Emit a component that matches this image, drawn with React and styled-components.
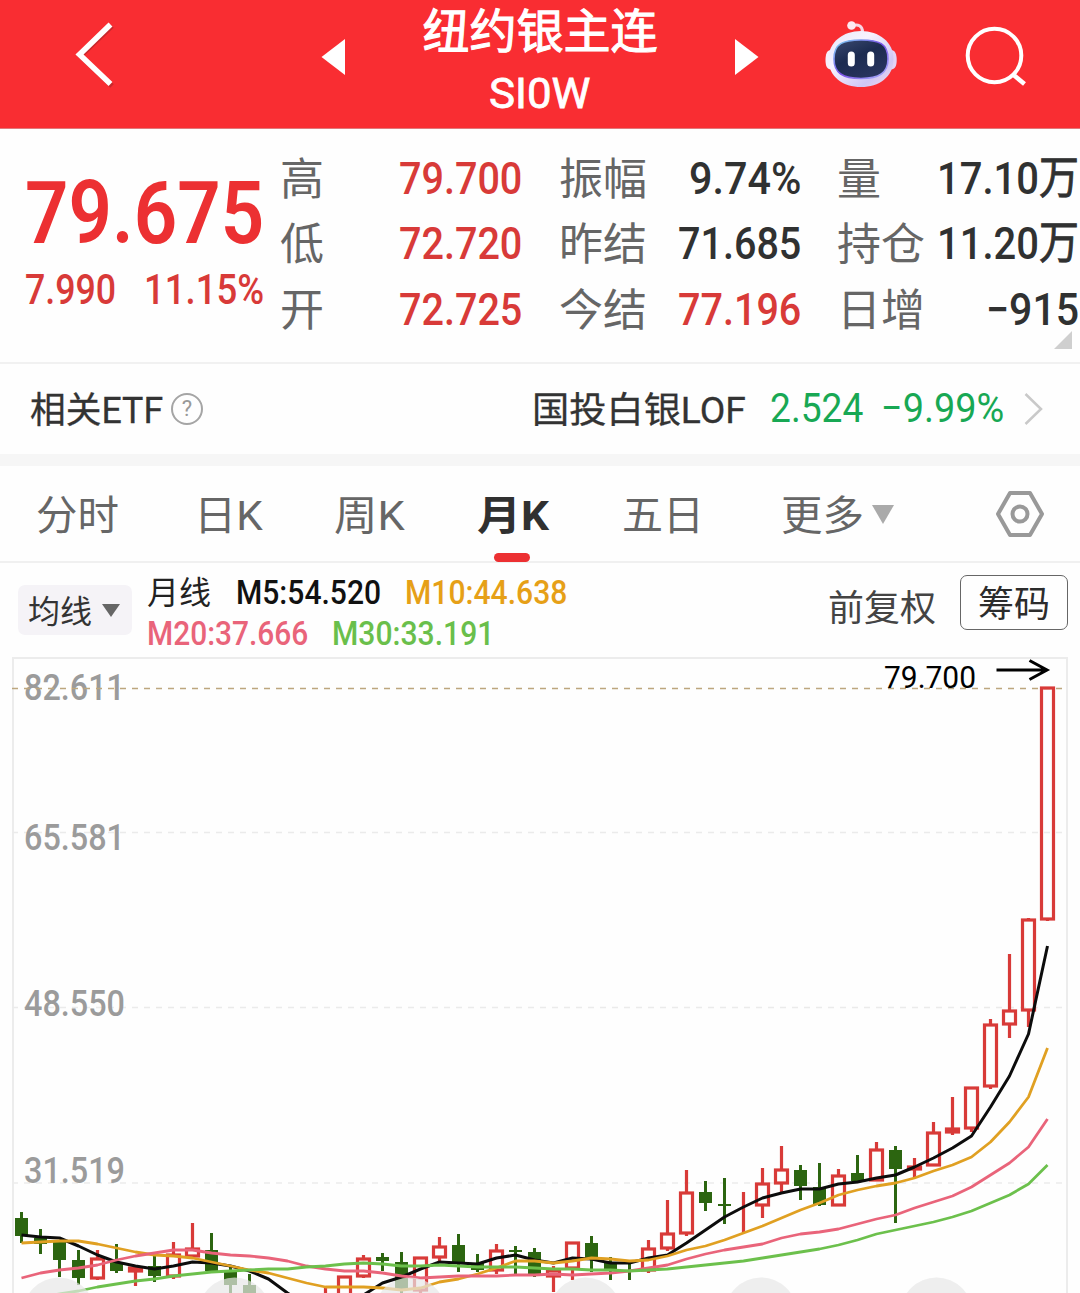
import React, { useLayoutEffect, useRef, useState } from "react";
import styled, { createGlobalStyle } from "styled-components";

const GlobalStyle = createGlobalStyle`
  * { box-sizing: border-box; }
  body {
    margin: 0;
    background: #fefefe;
    font-family: Roboto, "Noto Sans CJK SC", sans-serif;
    overflow: hidden;
  }
  svg { display: block; flex: none; }
`;

/* Text that condenses or widens itself to a given width */
const FitBox = styled.span`
  display: block;
  flex: none;
  width: ${(p) => p.$w}px;
  height: ${(p) => p.$lh || 50}px;
  padding-top: ${(p) => p.$drop || 0}px;
  line-height: ${(p) => p.$lh || 50}px;
  font-size: ${(p) => p.$size}px;
  font-weight: ${(p) => p.$weight || 400};
  -webkit-text-stroke: ${(p) => p.$stroke || 0}px currentColor;
  color: ${(p) => p.$color || "inherit"};
  white-space: nowrap;
`;
const FitInner = styled.span`
  display: inline-block;
  transform-origin: 0 50%;
`;
function Fit({ w, size, weight, color, lh, drop, stroke, children }) {
  const ref = useRef(null);
  const [scale, setScale] = useState(1);
  useLayoutEffect(() => {
    setScale(w / ref.current.offsetWidth);
  }, [w, size, weight, children]);
  return (
    <FitBox $w={w} $size={size} $weight={weight} $color={color} $lh={lh} $drop={drop} $stroke={stroke}>
      <FitInner ref={ref} style={{ transform: `scaleX(${scale})` }}>{children}</FitInner>
    </FitBox>
  );
}

const Page = styled.div`
  width: 1080px;
  height: 1293px;
  overflow: hidden;
  background: #fefefe;
`;

const Header = styled.header`
  display: flex;
  align-items: flex-start;
  height: 129px;
  background: #f92d32;
  border-bottom: 1px solid #e0797c;
  color: #fff;
`;
const Slot = styled.div`
  flex: none;
  margin-left: ${(p) => p.$left || 0}px;
  padding-top: ${(p) => p.$top || 0}px;
`;
const Title = styled.div`
  display: flex;
  flex-direction: column;
  align-items: center;
  width: 236px;
  margin-left: 76px;
`;

const Quote = styled.section`
  display: flex;
  height: 235px;
  border-bottom: 2px solid #f1f1f1;
  position: relative;
`;
const Price = styled.div`
  width: 280px;
  padding: 36px 0 0 25px;
`;
const Change = styled.div`
  display: flex;
  gap: 28px;
  padding-top: 6px;
`;
const Stats = styled.div`
  display: grid;
  grid-template-columns: 242px 37px 242px 36px 242px;
  grid-auto-rows: 65.5px;
  padding-top: 17px;
`;
const Stat = styled.div`
  grid-column: ${(p) => p.$col};
  display: flex;
  align-items: center;
  justify-content: space-between;
`;
const Corner = styled.i`
  position: absolute;
  right: 8px;
  bottom: 13px;
  border-left: 18px solid transparent;
  border-bottom: 18px solid #cfcfcf;
`;

const EtfRow = styled.section`
  display: flex;
  align-items: center;
  height: 90px;
  padding: 0 37px 0 30px;
  color: #333;
`;
const Spacer = styled.div`
  flex: 1;
`;
const Gap = styled.div`
  width: ${(p) => p.$w}px;
  flex: none;
`;
const Help = styled.span`
  width: 32px;
  height: 32px;
  margin-left: 8px;
  border: 2px solid #a5a5a5;
  border-radius: 50%;
  color: #999;
  font-size: 22px;
  line-height: 28px;
  text-align: center;
`;
const Divider = styled.div`
  height: 12px;
  background: #f6f6f6;
`;

const Tabs = styled.nav`
  display: flex;
  height: 97px;
  padding-left: 36px;
  border-bottom: 2px solid #f0f0f0;
`;
const Tab = styled.div`
  position: relative;
  display: flex;
  align-items: center;
  gap: 8px;
  height: 96px;
  margin-right: ${(p) => p.$after}px;
  color: ${(p) => (p.$active ? "#303030" : "#666")};
  &::after {
    content: "";
    display: ${(p) => (p.$active ? "block" : "none")};
    position: absolute;
    left: 17px;
    bottom: 0;
    width: 36px;
    height: 9px;
    border-radius: 5px;
    background: #ec3032;
  }
`;
const Caret = styled.i`
  flex: none;
  border: ${(p) => p.$half}px solid transparent;
  border-bottom: 0;
  border-top: ${(p) => p.$tall}px solid ${(p) => p.$color};
`;

const Indicators = styled.section`
  display: flex;
  height: 94px;
`;
const Picker = styled.button`
  display: flex;
  align-items: center;
  gap: 10px;
  width: 114px;
  height: 50px;
  margin: 22px 0 0 18px;
  padding: 0 0 0 10px;
  border: 0;
  border-radius: 7px;
  background: #f5f3f7;
  font-family: inherit;
  text-align: left;
  color: #333;
`;
const Legend = styled.div`
  width: 696px;
  padding: 8px 0 0 15px;
`;
const LegendRow = styled.div`
  display: flex;
  height: 41px;
  align-items: center;
`;
const Adjust = styled.div`
  padding-top: 19px;
  color: #444;
`;
const Chips = styled.button`
  display: flex;
  align-items: center;
  justify-content: center;
  width: 108px;
  height: 55px;
  margin: 12px 0 0 24px;
  padding: 0;
  border: 1.5px solid #666;
  border-radius: 7px;
  background: #fefefe;
  font-family: inherit;
  text-align: left;
  color: #2c2c2c;
`;

const Unit = styled.span`
  font-weight: 400;
  -webkit-text-stroke: 0.8px currentColor;
`;

const RED = "#d83a38";
const DARK = "#303131";

const STATS = [
  [["高", 44, "79.700", "", 123, RED], ["振幅", 88, "9.74%", "", 112, DARK], ["量", 44, "17.10", "万", 142, DARK]],
  [["低", 44, "72.720", "", 123, RED], ["昨结", 88, "71.685", "", 123, DARK], ["持仓", 88, "11.20", "万", 142, DARK]],
  [["开", 44, "72.725", "", 123, RED], ["今结", 88, "77.196", "", 123, RED], ["日增", 88, "−915", "", 93, DARK]],
];

/* kind, high, body top, body bottom, low */
const CANDLES = [
  ["g", 1212, 1218, 1236, 1243], ["g", 1229, 1238, 1244, 1254], ["g", 1242, 1242, 1260, 1277],
  ["g", 1250, 1260, 1278, 1285], ["r", 1250, 1259, 1278, 1280], ["g", 1244, 1262, 1271, 1273],
  ["r", 1266, 1268, 1271, 1286], ["g", 1255, 1266, 1276, 1282], ["r", 1242, 1255, 1276, 1279],
  ["r", 1223, 1249, 1256, 1259], ["g", 1233, 1250, 1271, 1272], ["g", 1267, 1271, 1285, 1300],
  ["g", 1274, 1285, 1300, 1300], null, null, null,
  ["r", 1287, 1300, 1310, 1310], ["r", 1277, 1277, 1300, 1300], ["r", 1255, 1259, 1276, 1278],
  ["g", 1253, 1257, 1261, 1271], ["g", 1252, 1262, 1290, 1300], ["r", 1258, 1258, 1290, 1293],
  ["r", 1237, 1247, 1257, 1261], ["g", 1234, 1245, 1263, 1272], ["g", 1254, 1263, 1270, 1272],
  ["r", 1244, 1251, 1270, 1274], ["g", 1246, 1250, 1252, 1276], ["g", 1248, 1252, 1275, 1277],
  ["r", 1266, 1271, 1276, 1292], ["r", 1243, 1243, 1268, 1280], ["g", 1236, 1243, 1258, 1272],
  ["g", 1257, 1262, 1269, 1280], ["g", 1264, 1270, 1272, 1280], ["r", 1240, 1249, 1270, 1273],
  ["r", 1200, 1234, 1248, 1251], ["r", 1170, 1193, 1233, 1236], ["g", 1181, 1192, 1203, 1211],
  ["g", 1178, 1204, 1206, 1224], ["r", 1192, 1205, 1205, 1233], ["r", 1168, 1184, 1205, 1218],
  ["r", 1146, 1170, 1183, 1193], ["g", 1165, 1170, 1186, 1200], ["g", 1163, 1187, 1205, 1206],
  ["r", 1169, 1176, 1205, 1206], ["g", 1155, 1173, 1181, 1183], ["r", 1142, 1150, 1180, 1180],
  ["g", 1146, 1150, 1169, 1223], ["r", 1158, 1167, 1169, 1178], ["r", 1122, 1133, 1165, 1166],
  ["r", 1097, 1129, 1132, 1135], ["r", 1088, 1088, 1128, 1132], ["r", 1019, 1025, 1086, 1089],
  ["r", 954, 1011, 1024, 1038], ["r", 918, 920, 1010, 1027], ["r", 688, 688, 919, 921],
];

const M5 = [1235, 1237, 1238, 1246, 1255, 1262, 1266, 1269, 1266, 1262, 1263, 1266, 1271, 1279, 1293, 1306, 1312, 1308, 1295, 1283, 1277, 1269, 1262, 1263, 1264, 1258, 1255, 1260, 1263, 1258, 1259, 1263, 1263, 1258, 1255, 1243, 1230, 1217, 1207, 1198, 1193, 1189, 1189, 1184, 1182, 1178, 1175, 1167, 1158, 1148, 1136, 1107, 1076, 1034, 946];
const M10 = [1243, 1242, 1241, 1241, 1244, 1248, 1252, 1255, 1256, 1258, 1262, 1266, 1270, 1273, 1278, 1283, 1287, 1287, 1287, 1288, 1290, 1288, 1282, 1279, 1274, 1268, 1261, 1261, 1263, 1261, 1258, 1259, 1261, 1260, 1256, 1250, 1246, 1240, 1233, 1226, 1218, 1210, 1203, 1195, 1190, 1186, 1183, 1178, 1171, 1165, 1157, 1142, 1122, 1097, 1048];
const M20 = [1278, 1273, 1270, 1268, 1265, 1260, 1256, 1253, 1250, 1250, 1253, 1255, 1256, 1258, 1261, 1266, 1269, 1271, 1271, 1273, 1276, 1278, 1277, 1276, 1276, 1276, 1275, 1275, 1274, 1275, 1274, 1273, 1271, 1268, 1265, 1259, 1254, 1250, 1247, 1244, 1238, 1234, 1232, 1229, 1224, 1219, 1215, 1208, 1202, 1196, 1187, 1175, 1163, 1147, 1119];
const M30 = [1300, 1297, 1294, 1291, 1287, 1284, 1281, 1279, 1276, 1274, 1272, 1271, 1270, 1269, 1269, 1267, 1266, 1264, 1263, 1264, 1266, 1266, 1265, 1266, 1267, 1267, 1267, 1268, 1269, 1269, 1270, 1270, 1271, 1270, 1269, 1267, 1265, 1263, 1261, 1258, 1255, 1252, 1249, 1245, 1240, 1234, 1230, 1226, 1222, 1217, 1211, 1203, 1195, 1184, 1165];

const xAt = (i) => 21.5 + i * 19;
const line = (values) => values.map((y, i) => `${xAt(i)},${y}`).join(" ");

function Candle({ i, data: [kind, high, top, bottom, low] }) {
  const x = xAt(i);
  if (kind === "g") {
    return (
      <g fill="#2c6510">
        <rect x={x - 1.5} y={high} width="3" height={low - high} />
        <rect x={x - 6.5} y={top} width="13" height={bottom - top} />
      </g>
    );
  }
  return (
    <g stroke={RED} strokeWidth="3.2" fill="none">
      <path d={`M${x} ${high}V${top}M${x} ${bottom}V${low}`} />
      <rect x={x - 6} y={top} width="12" height={bottom - top} />
    </g>
  );
}

const AXIS = [["82.611", 700], ["65.581", 850], ["48.550", 1016], ["31.519", 1183]];

function Chart() {
  return (
    <svg width="1080" height="636" viewBox="0 657 1080 636">
      <path d="M13 1300V658H1067V1300" fill="none" stroke="#ececec" strokeWidth="2" />
      <g stroke="#ebebeb" strokeWidth="1.5" strokeDasharray="6 6">
        <path d="M12 832.5H1066M12 1007.5H1066M12 1183H1066" />
      </g>
      <g fill="#9b9b9b" fontSize="36" fontWeight="500">
        {AXIS.map(([t, y]) => (
          <text key={t} x="24" y={y} textLength="101" lengthAdjust="spacingAndGlyphs">{t}</text>
        ))}
      </g>
      <path d="M12 688.5H1062" stroke="#bda67e" strokeWidth="1.7" strokeDasharray="6 6" />
      <text x="884" y="688" fontSize="32" fill="#000" textLength="92" lengthAdjust="spacingAndGlyphs">79.700</text>
      <path d="M996.5 670H1046M1029.5 660.5L1047 670L1029.5 679.5" fill="none" stroke="#000" strokeWidth="3" />
      {CANDLES.map((c, i) => c && <Candle key={i} i={i} data={c} />)}
      <g fill="none" strokeWidth="2.8" strokeLinejoin="round">
        <polyline points={line(M5)} stroke="#0c0c0c" strokeWidth="3" />
        <polyline points={line(M10)} stroke="#e0a022" />
        <polyline points={line(M20)} stroke="#e9647a" />
        <polyline points={line(M30)} stroke="#6cc04c" />
      </g>
      <g fill="#e7e7e7" fillOpacity="0.7">
        {[59, 234.5, 410, 585.5, 761, 936.5].map((cx) => (
          <circle key={cx} cx={cx} cy="1313.5" r="36" />
        ))}
      </g>
    </svg>
  );
}

function Robot() {
  return (
    <svg width="74" height="70" viewBox="824 20 74 70">
      <defs>
        <linearGradient id="shell" x1="0" y1="0" x2="1" y2="1">
          <stop offset="0" stopColor="#e6e6fb" />
          <stop offset="0.35" stopColor="#f8f3fe" />
          <stop offset="0.75" stopColor="#cfc6f5" />
          <stop offset="1" stopColor="#f6dcea" />
        </linearGradient>
        <linearGradient id="rim" x1="0" y1="0" x2="1" y2="1">
          <stop offset="0" stopColor="#7fd8f3" />
          <stop offset="0.5" stopColor="#7a4fe8" />
          <stop offset="1" stopColor="#a9b4fa" />
        </linearGradient>
        <linearGradient id="visor" x1="0" y1="0" x2="0.6" y2="1">
          <stop offset="0" stopColor="#3c4a70" />
          <stop offset="0.5" stopColor="#1c2b50" />
          <stop offset="1" stopColor="#28345e" />
        </linearGradient>
      </defs>
      <path d="M852 26C858 23.500 862.500 26 862.500 32" fill="none" stroke="#f7d7e4" strokeWidth="3" />
      <circle cx="851.500" cy="25.500" r="4.300" fill="#fdeaf2" />
      <path d="M831 50C827 50 825.500 54 825.500 60C825.500 66 827 69.500 831 69.500Z" fill="#f7eefb" />
      <path d="M891 50C895 50 896.700 54 896.700 60C896.700 66 895 69.500 891 69.500Z" fill="#e3d3f6" />
      <path d="M861 31C879 31 893.500 42 893.500 59C893.500 77 879 87 861 87C843 87 828.500 77 828.500 59C828.500 42 843 31 861 31Z" fill="url(#shell)" />
      <path d="M861 40C879 40 888 43.500 888 59C888 73 879 78.500 861 78.500C843 78.500 834 73 834 59C834 43.500 843 40 861 40Z" fill="url(#visor)" stroke="url(#rim)" strokeWidth="1.6" />
      <rect x="847.8" y="51.5" width="7" height="15" rx="3.5" fill="#fff" />
      <rect x="867.2" y="51.5" width="7" height="15" rx="3.5" fill="#fff" />
    </svg>
  );
}

export default function App() {
  return (
    <Page>
      <GlobalStyle />
      <Header>
        <Slot $left={74} $top={20}>
          <svg width="42" height="70" viewBox="74 20 42 70" fill="none">
            <path d="M112 26L80.500 56L112 86" stroke="#c9282c" strokeWidth="5" />
            <path d="M110.500 24.500L79.500 54.500L110.500 84" stroke="#fff" strokeWidth="5.600" />
          </svg>
        </Slot>
        <Slot $left={205} $top={39}>
          <svg width="25" height="36" viewBox="0 0 25 36"><path d="M0.5 18L24 0V36Z" fill="#fff" /></svg>
        </Slot>
        <Title>
          <Fit w={235} size={47} lh={60} drop={2} stroke={1.1}>纽约银主连</Fit>
          <Fit w={102} size={43} lh={66} stroke={0.8}>SI0W</Fit>
        </Title>
        <Slot $left={76} $top={39}>
          <svg width="25" height="36" viewBox="0 0 25 36"><path d="M24.500 18L1 0V36Z" fill="#fff" /></svg>
        </Slot>
        <Slot $left={65} $top={20}><Robot /></Slot>
        <Slot $left={66} $top={24}>
          <svg width="66" height="66" viewBox="964 24 66 66" fill="none" stroke="#fff" strokeWidth="4">
            <circle cx="994.500" cy="55.500" r="26.800" />
            <path d="M1013 74.500L1024.500 84" strokeWidth="4.500" />
          </svg>
        </Slot>
      </Header>

      <Quote>
        <Price>
          <Fit w={239} size={87} weight={600} color="#ec3032" lh={96}>79.675</Fit>
          <Change>
            <Fit w={91} size={42} weight={500} color={RED} lh={46}>7.990</Fit>
            <Fit w={120} size={42} weight={500} color={RED} lh={46}>11.15%</Fit>
          </Change>
        </Price>
        <Stats>
          {STATS.map((row) =>
            row.map(([label, lw, value, unit, vw, color], c) => (
              <Stat key={label} $col={c * 2 + 1}>
                <Fit w={lw} size={44} color="#666" drop={1}>{label}</Fit>
                <Fit w={vw} size={45} weight={500} color={color}>
                  {value}{unit && <Unit>{unit}</Unit>}
                </Fit>
              </Stat>
            ))
          )}
        </Stats>
        <Corner />
      </Quote>

      <EtfRow>
        <Fit w={133} size={36} drop={2} stroke={0.3}>相关ETF</Fit>
        <Help>?</Help>
        <Spacer />
        <Fit w={214} size={36} drop={2} stroke={0.3}>国投白银LOF</Fit>
        <Gap $w={24} />
        <Fit w={93} size={40} color="#18a854">2.524</Fit>
        <Gap $w={18} />
        <Fit w={123} size={40} color="#18a854">−9.99%</Fit>
        <Gap $w={20} />
        <svg width="19" height="32" viewBox="0 0 19 32" fill="none" stroke="#c9c9c9" strokeWidth="2.500">
          <path d="M1.500 1L17 16L1.500 31" />
        </svg>
      </EtfRow>
      <Divider />

      <Tabs>
        <Tab $after={75}><Fit w={83} size={41} drop={2}>分时</Fit></Tab>
        <Tab $after={71}><Fit w={69} size={41} drop={2}>日K</Fit></Tab>
        <Tab $after={72}><Fit w={71} size={41} drop={2}>周K</Fit></Tab>
        <Tab $after={73} $active><Fit w={72} size={41} weight={700} drop={2}>月K</Fit></Tab>
        <Tab $after={77}><Fit w={82} size={41} drop={2}>五日</Fit></Tab>
        <Tab $after={102}>
          <Fit w={83} size={41} drop={2}>更多</Fit>
          <Caret $half={11} $tall={19} $color="#aaa" />
        </Tab>
        <Tab $after={0}>
          <svg width="48" height="48" viewBox="0 0 48 48" fill="none" stroke="#999" strokeWidth="4" strokeLinejoin="round">
            <path d="M14 3H34L46 24L34 45H14L2 24Z" />
            <circle cx="24" cy="24" r="7.500" />
          </svg>
        </Tab>
      </Tabs>

      <Indicators>
        <Picker>
          <Fit w={64} size={32} drop={2}>均线</Fit>
          <Caret $half={9} $tall={13} $color="#666" />
        </Picker>
        <Legend>
          <LegendRow>
            <Fit w={64} size={32} color="#222" drop={1}>月线</Fit>
            <Gap $w={25} />
            <Fit w={145} size={34} weight={500} color="#111">M5:54.520</Fit>
            <Gap $w={24} />
            <Fit w={162} size={34} weight={500} color="#e6a017">M10:44.638</Fit>
          </LegendRow>
          <LegendRow>
            <Fit w={161} size={34} weight={500} color="#e9647a">M20:37.666</Fit>
            <Gap $w={24} />
            <Fit w={162} size={34} weight={500} color="#6abf4b">M30:33.191</Fit>
          </LegendRow>
        </Legend>
        <Adjust><Fit w={108} size={36} drop={2}>前复权</Fit></Adjust>
        <Chips><Fit w={72} size={36} drop={2}>筹码</Fit></Chips>
      </Indicators>
      <Chart />
    </Page>
  );
}
